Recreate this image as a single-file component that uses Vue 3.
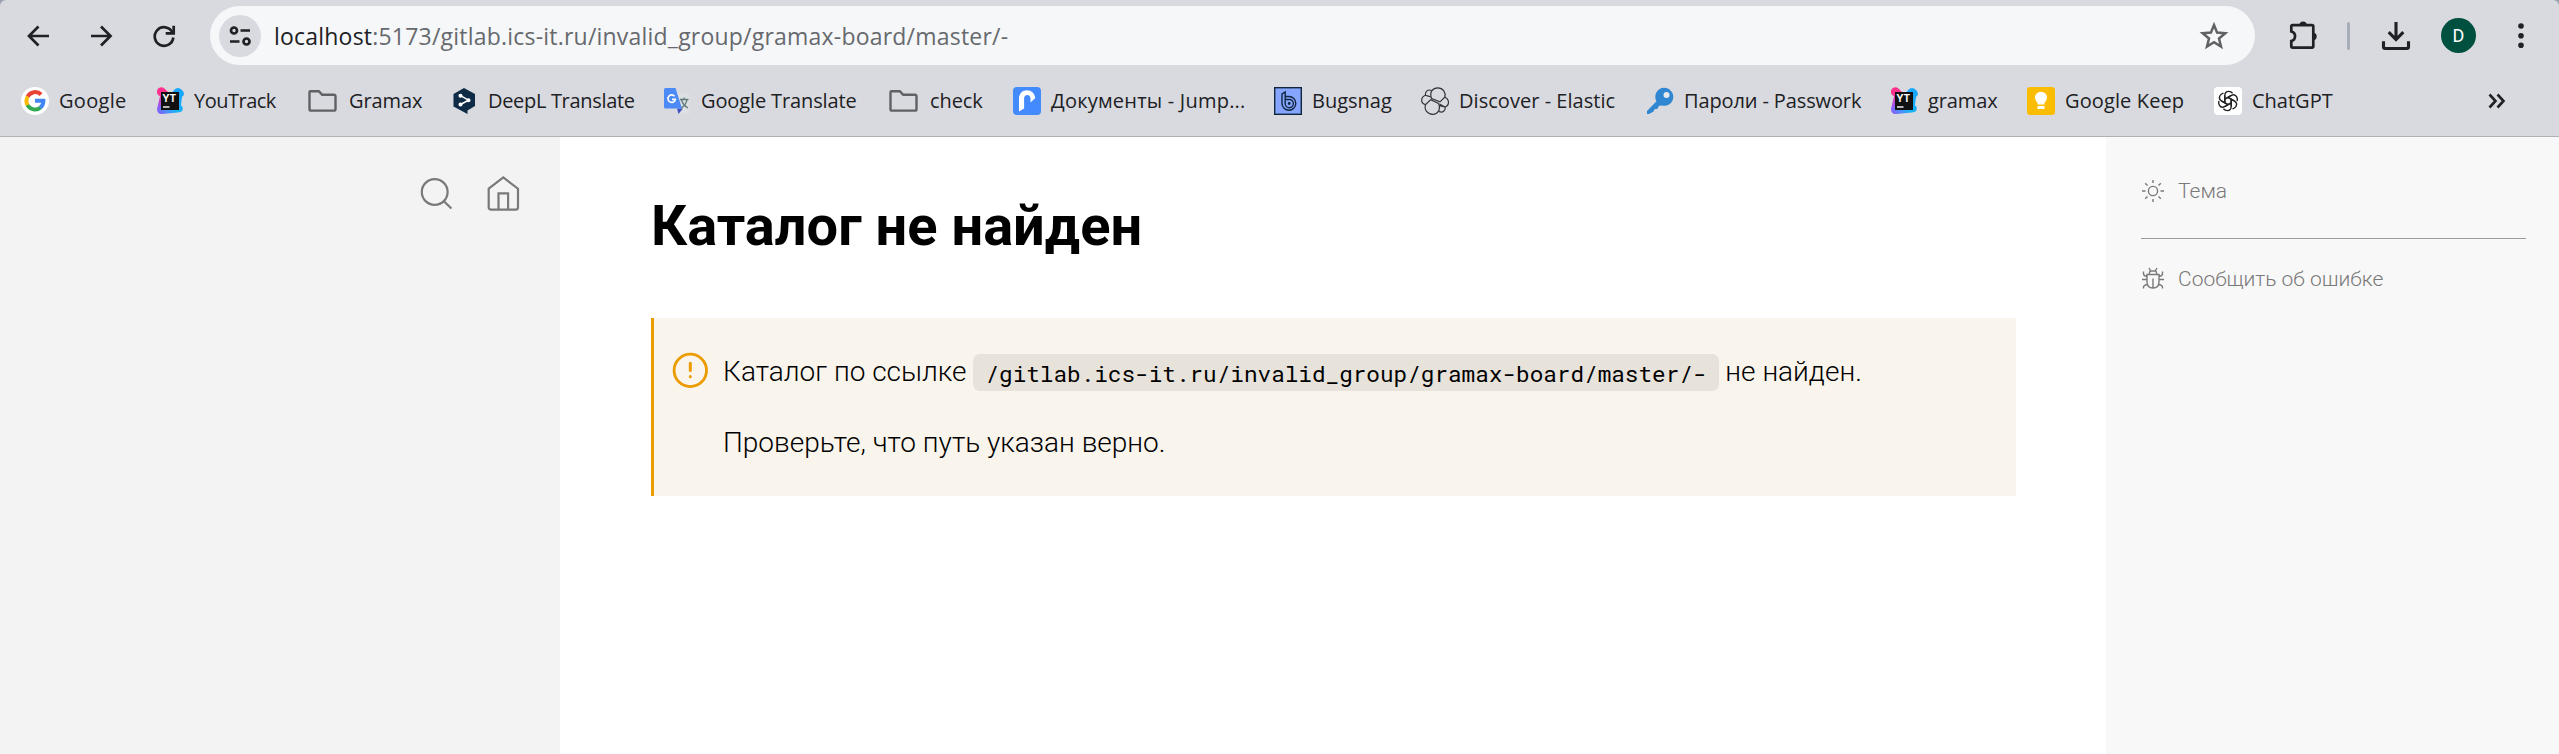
<script setup>
// tracking: letter-spacing of each label, in px
const bookmarks = [
  { icon: 'google', label: 'Google', tracking: 0.3 },
  { icon: 'youtrack', label: 'YouTrack', tracking: -0.5 },
  { icon: 'folder', label: 'Gramax', tracking: -0.1 },
  { icon: 'deepl', label: 'DeepL Translate', tracking: -0.32 },
  { icon: 'translate', label: 'Google Translate', tracking: -0.12 },
  { icon: 'folder', label: 'check', tracking: -0.1 },
  { icon: 'jump', label: 'Документы - Jump...', tracking: 0.22 },
  { icon: 'bugsnag', label: 'Bugsnag', tracking: 0 },
  { icon: 'elastic', label: 'Discover - Elastic', tracking: 0.04 },
  { icon: 'key', label: 'Пароли - Passwork', tracking: -0.12 },
  { icon: 'youtrack', label: 'gramax', tracking: -0.1 },
  { icon: 'keep', label: 'Google Keep', tracking: 0.12 },
  { icon: 'chatgpt', label: 'ChatGPT', tracking: 0 },
]
const petals = [0, 60, 120, 180, 240, 300]
</script>

<template>
  <div class="window">
    <header class="chrome">
      <div class="toolbar">
        <svg width="30" height="30" viewBox="0 0 30 30"><path d="M25 15H5.500M14.500 5.500 5 15l9.500 9.500" class="ink" /></svg>
        <svg width="30" height="30" viewBox="0 0 30 30"><path d="M5 15h19.500M15 5.500 24.500 15 15 24.500" class="ink" /></svg>
        <svg width="30" height="30" viewBox="0 0 30 30"><path d="M24.300 11.200A9.300 9.300 0 1 0 25.300 16.500" class="ink" /><path d="M25.700 4.800v7.600h-8" class="ink" /></svg>
        <div class="omnibox">
          <span class="site">
            <svg width="42" height="42" viewBox="0 0 42 42"><g class="ink"><circle cx="15" cy="15.500" r="3" /><path d="M21.500 15.500H31M11 26.500h9.500" /><circle cx="27.500" cy="26.500" r="3" /></g></svg>
          </span>
          <span class="url"><b>localhost</b>:5173/gitlab.ics-it.ru/invalid_group/gramax-board/master/-</span>
          <svg class="star" width="30" height="30" viewBox="0 0 30 30"><path d="M15 4l3.100 7.600 8.200.6-6.300 5.300 2 8L15 21.200 8 25.500l2-8-6.300-5.300 8.200-.6z" fill="none" stroke="#606165" stroke-width="2.500" /></svg>
        </div>
        <svg width="32" height="32" viewBox="0 0 32 32"><path d="M4.300 6.500q0-1.400 1.400-1.400h19.200q1.400 0 1.400 1.400v19.700q0 1.400-1.400 1.400H5.700q-1.400 0-1.400-1.400v-5.200c5-1.200 5-8.300 0-9.500z" class="ink" /><path d="M12.500 5a3.600 3.600 0 0 1 7.200 0zM26 12.700a3.700 3.700 0 0 1 0 7.400z" fill="#202124" /></svg>
        <i class="divider"></i>
        <svg width="32" height="32" viewBox="0 0 32 32"><path d="M16 2v17M8.700 12.200 16 19.500l7.300-7.300" class="ink thick" /><path d="M3.500 21.200v5.600q0 1.700 1.700 1.700h21.600q1.700 0 1.700-1.700v-5.600" class="ink thick" /></svg>
        <span class="avatar">D</span>
        <svg width="10" height="32" viewBox="0 0 10 32"><g fill="#202124"><circle cx="5" cy="6" r="2.800" /><circle cx="5" cy="15.700" r="2.800" /><circle cx="5" cy="25.300" r="2.800" /></g></svg>
      </div>

      <nav class="bookmarks">
        <a v-for="(b, i) in bookmarks" :key="i" class="bookmark" :class="b.icon" :style="{ letterSpacing: b.tracking + 'px' }">
          <svg v-if="b.icon === 'google'" width="28" height="28" viewBox="0 0 28 28">
            <circle cx="14" cy="14" r="14" fill="#fff" />
            <g fill="none" stroke-width="4">
              <path d="M20.100 7.500A8.500 8.500 0 0 0 6.600 9.700" stroke="#ea4335" />
              <path d="M6.800 9.500a8.500 8.500 0 0 0 0 9" stroke="#fbbc04" />
              <path d="M6.500 18.100a8.500 8.500 0 0 0 13 2.300" stroke="#34a853" />
              <path d="M19.300 20.600a8.500 8.500 0 0 0 3.100-6.800H14" stroke="#4285f4" />
            </g>
          </svg>
          <svg v-else-if="b.icon === 'youtrack'" width="28" height="28" viewBox="0 0 28 28">
            <defs>
              <linearGradient id="ytLeft" x1="0" y1="0" x2="0" y2="1"><stop offset=".25" stop-color="#ff318c" /><stop offset=".75" stop-color="#8f5bff" /></linearGradient>
              <linearGradient id="ytRight" x1="1" y1="0" x2="0" y2="1"><stop offset=".3" stop-color="#18a7ff" /><stop offset=".6" stop-color="#17b5f6" /><stop offset="1" stop-color="#8f5bff" /></linearGradient>
            </defs>
            <path d="M1 5a4.500 4.500 0 0 1 8-3l6 6-5 13-4 6q-5 0-5-5l3-13Q1 8 1 5z" fill="url(#ytLeft)" />
            <path d="M18 3q4-4 8 0t0 7l-1 8q3 3 1 6-1 1-4 1.500L6 27q-4 0-4-4l12-14z" fill="url(#ytRight)" />
            <rect x="5" y="5" width="18" height="18" fill="#111" />
            <text x="6.200" y="15.200" class="yt">YT</text>
            <path d="M7 20h6.500" stroke="#fff" stroke-width="1.400" />
          </svg>
          <svg v-else-if="b.icon === 'folder'" width="30" height="28" viewBox="0 0 30 28">
            <path d="M2.500 4.200h8.300l3.400 3.600h11.600q1.700 0 1.700 1.700v12.400q0 1.700-1.700 1.700H3.200q-1.700 0-1.700-1.700V5.200q0-1 1-1z" fill="none" stroke="#606165" stroke-width="2.400" />
          </svg>
          <svg v-else-if="b.icon === 'deepl'" width="28" height="28" viewBox="0 0 28 28">
            <path d="M14 1 25 7v12l-7.500 4.500V27L3.500 19.500V7z" fill="#0f2b46" />
            <g stroke="#fff" stroke-width="1.500" fill="#fff"><path d="M10.500 8.700 18.500 13.200 10.500 17.500" fill="none" /><circle cx="10.500" cy="8.700" r="1.300" /><circle cx="18.500" cy="13.200" r="1.300" /><circle cx="10.500" cy="17.500" r="1.300" /></g>
          </svg>
          <svg v-else-if="b.icon === 'translate'" width="28" height="28" viewBox="0 0 28 28">
            <path d="M12 6.500h13q1.500 0 1.500 1.500v17.500q0 1.500-1.500 1.500H15z" fill="#dde0e3" />
            <path d="M17 12.500h8.500M21 10.500v2M24 12.500q-1 6-6 8.500M18.500 13q1.500 5 6.500 8" stroke="#607d7b" stroke-width="1.400" fill="none" />
            <path d="M14 21.500h6L15.500 27z" fill="#3d4fc1" />
            <path d="M2.500 1h10L19 21.500H2.500Q1 21.500 1 20V2.500Q1 1 2.500 1z" fill="#4c8bf5" />
            <path d="M11.500 9.300a3.700 3.700 0 1 0 .8 3H9" stroke="#fff" stroke-width="1.700" fill="none" />
          </svg>
          <svg v-else-if="b.icon === 'jump'" width="28" height="28" viewBox="0 0 28 28">
            <rect width="28" height="28" rx="4" fill="#448aff" />
            <path d="M6 24.500V11.500C6 6.500 9.500 3.200 14 3.200c4.500 0 7.500 3 8.300 7.800L17.500 15.500V11.500c0-2-1.300-3.400-3.200-3.400s-3.200 1.400-3.200 3.400v10z" fill="#fff" />
          </svg>
          <svg v-else-if="b.icon === 'bugsnag'" width="28" height="28" viewBox="0 0 28 28">
            <rect x=".7" y=".7" width="26.600" height="26.600" fill="#85a5ff" stroke="#10263f" stroke-width="1.400" />
            <g fill="none" stroke="#10263f" stroke-width="1.400"><path d="M8 10.500V7l3.200-2v11.700A4.100 4.100 0 1 0 15.300 12.500H11M8 10.500v6A6.900 6.900 0 1 0 15 9.500h-3.500" /></g><circle cx="15.200" cy="16.500" r="1.400" fill="#10263f" />
          </svg>
          <svg v-else-if="b.icon === 'elastic'" width="28" height="28" viewBox="0 0 28 28">
            <g fill="none" stroke="#33353a" stroke-width="1.200"><path d="M10.600 11.500C8 5 12 .8 16.800.8c5 0 8.300 4.600 7 9.300L19 14.900zM17.600 16.500c2.400 6-.8 10.800-5.800 10.800-5.300 0-9-4.400-7.200-9.800l5-4.700z" /><path d="M9.800 9.800 4.500 8.300C3.800 4.600 7 1.800 10.600 3.600M23.800 10.100c5.200 2.300 4.600 8.500.2 9.900l-5.500-3M4.500 8.300C-.7 10.500-.6 16.200 4.600 17.700M24 20c1 3.500-2.500 6.200-6 4.400M18.400 18.700l5.600 1.300" /></g>
          </svg>
          <svg v-else-if="b.icon === 'key'" width="28" height="28" viewBox="0 0 28 28">
            <path d="M1 24 10.500 14.300A9 9 0 1 1 16 18.500l-3 .3-1.500 3-3 .5-1.200 2.500L3 27H1z" fill="#2f86d1" /><circle cx="20.500" cy="8" r="3" fill="#e4e8ee" />
          </svg>
          <svg v-else-if="b.icon === 'keep'" width="28" height="28" viewBox="0 0 28 28">
            <rect width="28" height="28" rx="3" fill="#fbbc04" /><path d="M10.500 17.500v-2A6 6 0 1 1 17.500 15.500v2zM10.500 19h7v3h-7z" fill="#fff" />
          </svg>
          <svg v-else width="28" height="28" viewBox="0 0 28 28">
            <rect width="28" height="28" rx="4" fill="#fff" />
            <g v-for="a in petals" :key="a" :transform="`rotate(${a} 14 14)`"><path d="M10.800 15.800V8.700q0-4.300 4-4.300 2.200 0 3.800 1.800M10.800 12.200l6.300-3.700" fill="none" stroke="#222" stroke-width="1.400" /></g>
          </svg>
          <span>{{ b.label }}</span>
        </a>
        <svg width="20" height="20" viewBox="0 0 20 20"><path d="m2.500 3.500 6 6.500-6 6.500M10.500 3.500l6 6.500-6 6.500" fill="none" stroke="#202124" stroke-width="2.600" /></svg>
      </nav>
    </header>

    <div class="page">
      <aside class="left">
        <svg width="34" height="36" viewBox="0 0 34 36"><g class="thin"><circle cx="14.700" cy="16" r="12.900" /><path d="m23.900 25.200 7.500 7.300" /></g></svg>
        <svg width="34" height="36" viewBox="0 0 34 36"><g class="thin"><path d="M2.700 12.700 17.300 1.500 32 12.700v18.500q0 2.500-2.500 2.500H5.200q-2.500 0-2.500-2.500z" /><path d="M12.500 33.500V17.300h9.600v16.200" /></g></svg>
      </aside>
      <main>
        <h1>Каталог не найден</h1>
        <section class="note">
          <svg width="36" height="36" viewBox="0 0 36 36"><circle cx="18.300" cy="18.400" r="16.200" fill="none" stroke="#ec9c00" stroke-width="2.800" /><path d="M18.300 11.300v7.300M18.300 24.500v.2" stroke="#ec9c00" stroke-width="3" stroke-linecap="round" /></svg>
          <div>
            <p>Каталог по ссылке <code>/gitlab.ics-it.ru/invalid_group/gramax-board/master/-</code> не найден.</p>
            <p>Проверьте, что путь указан верно.</p>
          </div>
        </section>
      </main>
      <aside class="right">
        <a>
          <svg width="24" height="24" viewBox="0 0 24 24"><g class="thin fine"><circle cx="12" cy="12" r="4.600" /><path d="M12 1v3M12 20v3M1 12h3.500M19.500 12H23M4.200 4.200l2.300 2.300M17.500 17.500l2.300 2.300M4.200 19.800l2.300-2.300M17.500 6.500l2.300-2.300" /></g></svg>
          <span>Тема</span>
        </a>
        <hr />
        <a>
          <svg width="24" height="24" viewBox="0 0 24 24"><g class="thin fine"><path d="M6 7.500h12v7.500q0 6-6 6t-6-6zM12 11.500V21M8.500 7.500V5.500q0-1.500 1.500-1.500h4q1.500 0 1.500 1.500v2M8 1l1.800 3M16 1l-1.800 3M1 12.500h5M18 12.500h5M2.500 4.500v2.200q0 2 3.500 3M21.500 4.500v2.200q0 2-3.500 3M2.500 21.500v-1.200q0-2 4-3M21.500 21.500v-1.200q0-2-4-3" /></g></svg>
          <span>Сообщить об ошибке</span>
        </a>
      </aside>
    </div>
  </div>
</template>

<style>
body { margin: 0; overflow: hidden; }
</style>

<style scoped>
.window { width: 2559px; height: 754px; display: flex; flex-direction: column; background: #9aa1b0; overflow: hidden; }
.chrome { box-sizing: border-box; height: 137px; border-bottom: 1px solid #afb1b7; border-radius: 6px 6px 0 0; background: #d9dadf; }
.toolbar { height: 59px; padding: 6px 0 0 24px; display: grid; grid-template-columns: 62px 62px 62px 2077px 60px 33px 61px 75px 43px; align-items: center; }
.ink { fill: none; stroke: #202124; stroke-width: 2.7; }
.ink.thick { stroke-width: 3.1; }
.omnibox { width: 2045px; height: 59px; border-radius: 30px; background: #f6f7f9; display: flex; align-items: center; }
.site { width: 42px; height: 42px; margin-left: 9px; border-radius: 50%; background: #d9dadf; flex: none; }
.site svg { display: block; }
.url { margin-left: 13px; font: 23px/32px "Open Sans", sans-serif; letter-spacing: .21px; color: #66696d; white-space: nowrap; }
.url b { font-weight: 400; color: #202124; }
.star { margin-left: auto; margin-right: 26px; }
.divider { width: 3px; height: 28px; border-radius: 2px; background: #a9adba; }
.avatar { width: 35px; height: 35px; border-radius: 50%; background: #00503f; color: #fff; font: 18px/35px Roboto, sans-serif; text-align: center; }
.bookmarks { height: 71px; padding-left: 21px; display: grid; grid-template-columns: 135px 152px 142px 213px 226px 124px 261px 147px 225px 244px 137px 187px 273px 30px; align-items: center; }
.bookmark { display: flex; align-items: center; gap: 10px; font: 20px/28px "Open Sans", sans-serif; color: #202124; white-space: nowrap; }
.bookmark.folder { gap: 11px; }
.bookmark svg { flex: none; }
.yt { font: 700 10px Inter, sans-serif; letter-spacing: 0; fill: #fff; }
.page { flex: 1; display: grid; grid-template-columns: 560px 1546px 453px; background: #fff; }
.left { background: #f3f3f3; display: flex; justify-content: flex-end; gap: 32px; padding: 39px 40px 0 0; }
.thin { fill: none; stroke: #797979; stroke-width: 2.2; }
.thin.fine { stroke-width: 1.4; }
main { padding: 56px 90px 0 91px; }
h1 { margin: 0; font: 700 56px/66px Roboto, sans-serif; color: #000; }
.note { box-sizing: border-box; height: 178px; margin-top: 59px; border-left: 3px solid #ec9c00; background: #f9f4ec; display: flex; gap: 15px; padding: 34px 0 0 18px; }
.note p { margin: 0 0 29px; font: 300 28px/42px Roboto, sans-serif; color: #000; white-space: nowrap; }
.note div { margin-top: -1px; }
code { font: 22.68px/30px "Roboto Mono", "DejaVu Sans Mono", monospace; vertical-align: -1px; padding: 4px 12px 3px; border-radius: 7px; background: #e7e2da; }
.right { background: #f8f8f8; padding: 42px 33px 0 35px; }
.right a { display: flex; align-items: center; gap: 13px; font: 300 21px/24px Roboto, sans-serif; color: #797979; }
.right hr { height: 1px; border: 0; margin: 35px 0 28px; background: #9c9c9c; }
</style>
